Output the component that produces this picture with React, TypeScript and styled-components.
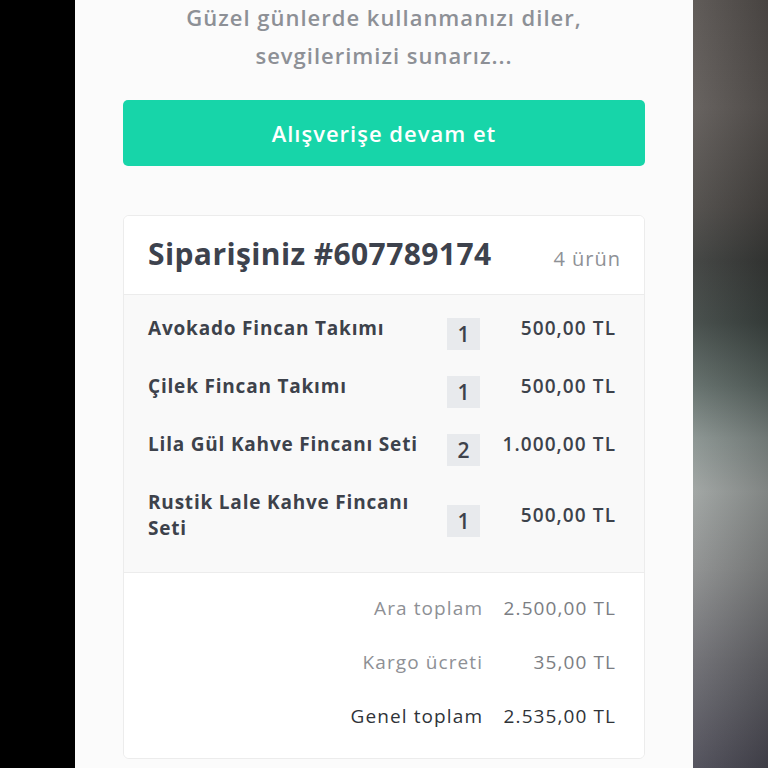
import React from "react";
import styled, { createGlobalStyle } from "styled-components";

const Global = createGlobalStyle`
  html, body { margin: 0; padding: 0; background: #000; }
  body { font-family: "Open Sans", "Noto Sans", sans-serif; }
  * { box-sizing: border-box; }
`;

const Screen = styled.div`
  display: flex;
  width: 768px;
  height: 768px;
  overflow: hidden;
`;

const LeftBar = styled.div`
  width: 75px;
  flex: none;
  background: #000;
`;

const RightBar = styled.div`
  width: 75px;
  flex: none;
  background:
    linear-gradient(to right, rgba(255, 255, 255, 0.06), rgba(0, 0, 0, 0.18)),
    linear-gradient(
      to bottom,
      #57524f 0%,
      #5f5a57 14%,
      #4c4946 27%,
      #3b3d3b 34%,
      #3f4744 42%,
      #5d6965 50%,
      #86908d 57%,
      #9da2a0 64%,
      #8c8e8e 74%,
      #6c6c71 86%,
      #4b4a55 100%
    );
`;

const Main = styled.div`
  width: 618px;
  flex: none;
  background: #fbfbfb;
  padding: 0 48px;
  display: flex;
  flex-direction: column;
`;

const Thanks = styled.p`
  margin: -2px 0 0;
  text-align: center;
  font-size: 22px;
  line-height: 38px;
  font-weight: 600;
  letter-spacing: 1px;
  color: #8d9096;
`;

const ContinueButton = styled.button`
  margin-top: 26px;
  height: 66px;
  border: none;
  border-radius: 5px;
  background: #17d5a9;
  color: #fff;
  font-family: inherit;
  font-size: 22px;
  font-weight: 600;
  letter-spacing: 1px;
  cursor: pointer;
`;

const Card = styled.section`
  margin-top: 49px;
  border: 1px solid #ececec;
  border-radius: 6px;
  overflow: hidden;
  background: #fff;
`;

const CardHeader = styled.header`
  height: 78px;
  padding: 0 24px;
  display: flex;
  align-items: center;
  justify-content: space-between;
  background: #fff;
`;

const Title = styled.h2`
  margin: -3px 0 0;
  font-size: 30px;
  font-weight: 700;
  letter-spacing: 0.4px;
  color: #3d424d;
`;

const Count = styled.span`
  margin: 6px -1px 0 0;
  font-size: 20px;
  font-weight: 500;
  letter-spacing: 1px;
  color: #8e9196;
`;

const Items = styled.div`
  border-top: 1px solid #ececec;
  border-bottom: 1px solid #ececec;
  background: #f9f9f9;
  padding: 20px 29px 19px 24px;
  display: flex;
  flex-direction: column;
  gap: 20px;
`;

const ItemRow = styled.div`
  display: grid;
  grid-template-columns: 1fr 33px 135px;
  align-items: center;
`;

const ItemName = styled.span`
  padding-right: 24px;
  margin-bottom: 12px;
  font-size: 19px;
  line-height: 26px;
  font-weight: 700;
  letter-spacing: 0.8px;
  color: #3d424b;
`;

const Qty = styled.span`
  height: 32px;
  display: flex;
  align-items: center;
  justify-content: center;
  background: #e8eaed;
  font-size: 21px;
  font-weight: 600;
  color: #3d424b;
`;

const Price = styled.span`
  margin: 0 -1.1px 12px 0;
  line-height: 26px;
  text-align: right;
  font-size: 19px;
  font-weight: 600;
  letter-spacing: 1.1px;
  color: #3d424b;
`;

const Totals = styled.div`
  padding: 23px 29px 30px 24px;
  display: flex;
  flex-direction: column;
  gap: 30px;
  background: #fff;
`;

const TotalRow = styled.div`
  display: flex;
  justify-content: flex-end;
  align-items: center;
  gap: 12px;
  margin-right: -1.1px;
  line-height: 24px;
  font-size: 19px;
  font-weight: 500;
  letter-spacing: 1.1px;
`;

const TotalLabel = styled.span<{ $strong?: boolean }>`
  color: ${(p) => (p.$strong ? "#2f3338" : "#8e9095")};
`;

const TotalValue = styled.span<{ $strong?: boolean }>`
  width: 121px;
  text-align: right;
  color: ${(p) => (p.$strong ? "#2f3338" : "#7b7e83")};
`;

const items = [
  { name: "Avokado Fincan Takımı", qty: 1, price: "500,00 TL" },
  { name: "Çilek Fincan Takımı", qty: 1, price: "500,00 TL" },
  { name: "Lila Gül Kahve Fincanı Seti", qty: 2, price: "1.000,00 TL" },
  { name: "Rustik Lale Kahve Fincanı Seti", qty: 1, price: "500,00 TL" },
];

const totals = [
  { label: "Ara toplam", value: "2.500,00 TL" },
  { label: "Kargo ücreti", value: "35,00 TL" },
  { label: "Genel toplam", value: "2.535,00 TL", strong: true },
];

export default function App() {
  return (
    <>
      <Global />
      <Screen>
        <LeftBar />
        <Main>
          <Thanks>
            Güzel günlerde kullanmanızı diler,
            <br />
            sevgilerimizi sunarız...
          </Thanks>
          <ContinueButton>Alışverişe devam et</ContinueButton>
          <Card>
            <CardHeader>
              <Title>Siparişiniz #607789174</Title>
              <Count>4 ürün</Count>
            </CardHeader>
            <Items>
              {items.map((it) => (
                <ItemRow key={it.name}>
                  <ItemName>{it.name}</ItemName>
                  <Qty>{it.qty}</Qty>
                  <Price>{it.price}</Price>
                </ItemRow>
              ))}
            </Items>
            <Totals>
              {totals.map((t) => (
                <TotalRow key={t.label}>
                  <TotalLabel $strong={t.strong}>{t.label}</TotalLabel>
                  <TotalValue $strong={t.strong}>{t.value}</TotalValue>
                </TotalRow>
              ))}
            </Totals>
          </Card>
        </Main>
        <RightBar />
      </Screen>
    </>
  );
}
